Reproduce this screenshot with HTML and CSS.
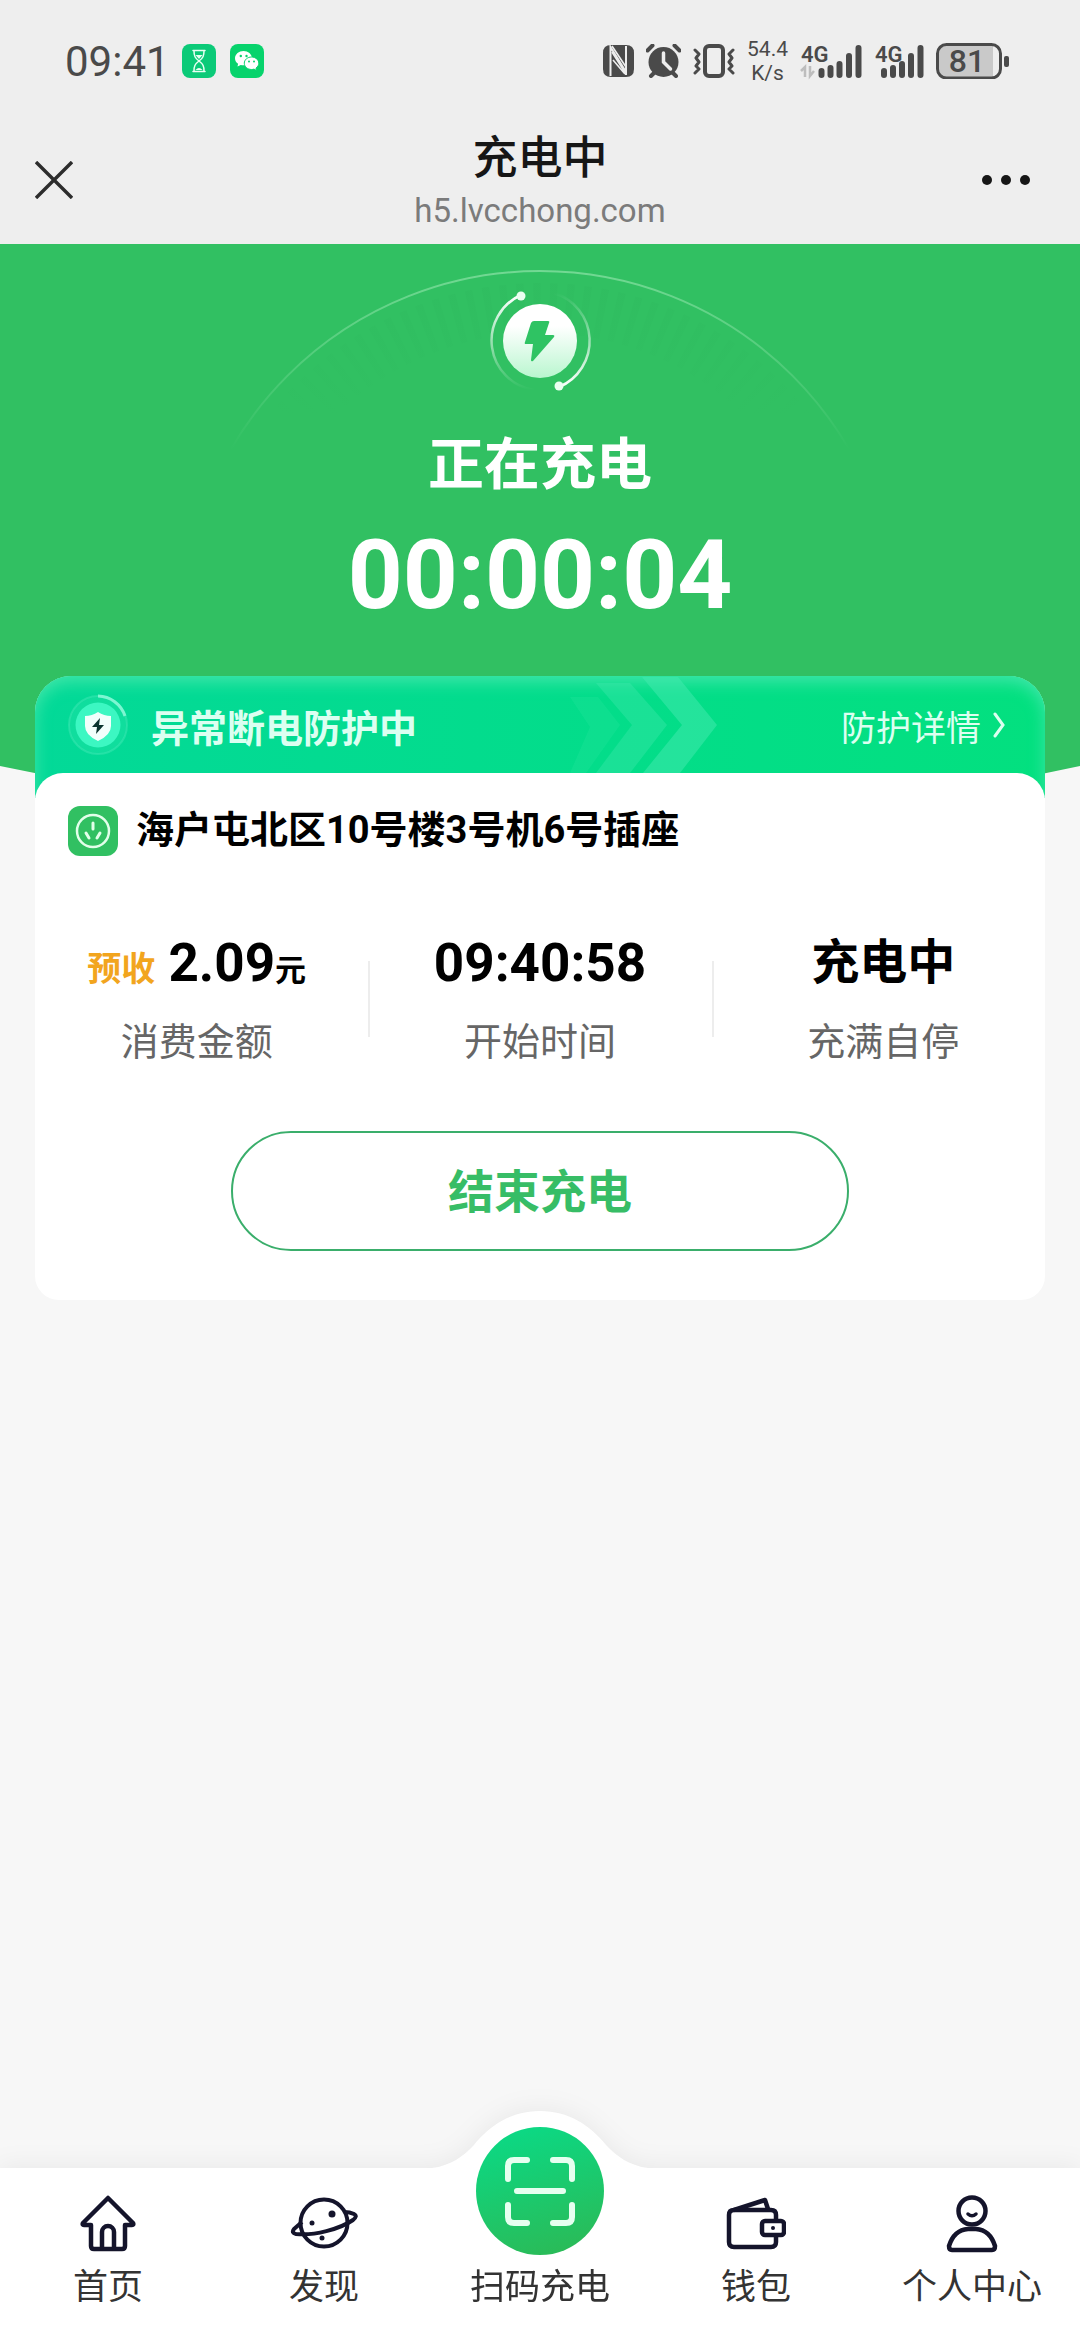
FILE: index.html
```html
<!DOCTYPE html>
<html lang="zh-CN">
<head>
<meta charset="utf-8">
<meta name="viewport" content="width=device-width, initial-scale=1">
<title>充电中</title>
<link rel="stylesheet" href="styles.css">
</head>
<body>
<header class="top">
  <div class="status">
    <div class="status-left">
      <span class="clock">09:41</span>
      <svg class="app" viewBox="0 0 34 34" aria-hidden="true">
        <rect width="34" height="34" rx="8" fill="#0bca78"/>
        <path d="M11 6.500h12M11 27.500h12M12 7c0 5 1 7 5 10c4-3 5-5 5-10M12 27c0-5 1-7 5-10c4 3 5 5 5 10" fill="none" stroke="#e8fff3" stroke-width="1.500" stroke-linecap="round"/>
        <path d="M13.500 11h7l-3.500 4zM13.500 26q3.500-4 7 0z" fill="#e8fff3"/>
      </svg>
      <svg class="app" viewBox="0 0 34 34" aria-hidden="true">
        <rect width="34" height="34" rx="8" fill="#07d36c"/>
        <path d="M13.500 7C9 7 5 10.200 5 14.200c0 2.300 1.200 4.200 3.100 5.500L7.500 22.500l3.200-1.600c1 .3 2 .4 3.200.4C18.500 21.300 22 18.200 22 14.200S18 7 13.500 7z" fill="#fff"/>
        <path d="M21.500 13c-3.900 0-7.200 2.700-7.200 6.200s3.300 6.300 7.200 6.300c.9 0 1.800-.1 2.500-.4l2.600 1.500-.6-2.500c1.700-1.200 2.800-2.900 2.800-4.900 0-3.500-3.400-6.200-7.300-6.200z" fill="#fff" stroke="#07d36c"/>
        <g fill="#07d36c"><circle cx="10.800" cy="12" r="1.200"/><circle cx="16.500" cy="12" r="1.200"/><circle cx="19" cy="17.500" r="1"/><circle cx="24" cy="17.500" r="1"/></g>
      </svg>
    </div>
    <div class="status-right">
      <svg width="31" height="32" viewBox="0 0 31 32" aria-hidden="true">
        <path d="M8 0h15q8 0 8 8v16q0 8-8 8H8q-8 0-8-8V8q0-8 8-8z" fill="#4a4a4a"/>
        <path d="M7.500 31V2L23 27M23 1v29" fill="none" stroke="#eee" stroke-width="2"/>
        <path d="M9 7l14 22M9 1l14 21M10 15l12 14" fill="none" stroke="#eee" stroke-width="1.600"/>
      </svg>
      <svg width="35" height="34" viewBox="0 0 35 34" aria-hidden="true">
        <circle cx="17.500" cy="18" r="15" fill="#4a4a4a"/>
        <path d="M1.500 6.500l5-5M33.500 6.500l-5-5M5 32l4-4M30 32l-4-4" stroke="#4a4a4a" stroke-width="4" stroke-linecap="round"/>
        <path d="M17.500 9v9l7 7" fill="none" stroke="#eee" stroke-width="3.500" stroke-linecap="round"/>
      </svg>
      <svg width="42" height="34" viewBox="0 0 42 34" fill="none" stroke="#4a4a4a" aria-hidden="true">
        <rect x="12" y="2" width="18" height="30" rx="4" stroke-width="4"/>
        <path d="M2 6l4 4-3 4 3 4-3 4 3 3-4 4M40 6l-4 4 3 4-3 4 3 4-3 3 4 4" stroke-width="3" stroke-linejoin="round" stroke-linecap="round"/>
      </svg>
      <div class="speed"><span>54.4</span><span>K/s</span></div>
      <svg width="62" height="44" viewBox="0 -4 62 44" aria-hidden="true">
        <text class="net" x="1" y="19">4G</text>
        <path d="M1 28l4-4v10M10 23v10l4-5" fill="none" stroke="#bdbdbd" stroke-width="2.500"/>
        <path d="M21.500 28v4M30.500 25v7M39.500 21v11M49 13v19M58.500 5v27" stroke="#4a4a4a" stroke-width="6" stroke-linecap="round"/>
      </svg>
      <svg width="50" height="44" viewBox="0 -4 50 44" aria-hidden="true">
        <text class="net" x="1" y="19">4G</text>
        <path d="M10 28v4M19 25v7M28 21v11M37 13v19M46.500 5v27" stroke="#4a4a4a" stroke-width="6" stroke-linecap="round"/>
      </svg>
      <svg width="73" height="36" viewBox="0 0 73 36" aria-hidden="true">
        <path d="M10 3h47v31H10q-7 0-7-8V11q0-8 7-8z" fill="#c9c9c9"/>
        <rect x="1.500" y="1.500" width="63" height="33.500" rx="9" fill="none" stroke="#4a4a4a" stroke-width="3"/>
        <rect x="68" y="13" width="5" height="11" rx="2" fill="#4a4a4a"/>
        <text class="level" x="31" y="29" text-anchor="middle">81</text>
      </svg>
    </div>
  </div>
  <div class="nav">
    <button class="icon-btn" type="button" aria-label="关闭">
      <svg width="38" height="38" viewBox="0 0 38 38"><path d="M1 1l36 36M37 1L1 37" stroke="#2c2c2c" stroke-width="3.400"/></svg>
    </button>
    <div class="nav-title">
      <h1>充电中</h1>
      <p>h5.lvcchong.com</p>
    </div>
    <button class="icon-btn icon-btn-end" type="button" aria-label="更多">
      <svg width="50" height="12" viewBox="0 0 50 12" fill="#161616"><circle cx="6" cy="6" r="5"/><circle cx="25" cy="6" r="5"/><circle cx="44" cy="6" r="5"/></svg>
    </button>
  </div>
</header>

<main>
  <section class="hero">
    <svg class="hero-shape" viewBox="0 0 1080 580" preserveAspectRatio="none" aria-hidden="true">
      <path d="M0 0H1080V522Q540 638 0 522z" fill="#31c062"/>
    </svg>
    <svg class="hero-dial" width="720" height="360" viewBox="0 0 720 360" aria-hidden="true">
      <defs>
        <linearGradient id="fade" x1="0" y1="0" x2="0" y2="1">
          <stop offset="0" stop-color="#8ee3a8" stop-opacity=".7"/>
          <stop offset=".5" stop-color="#8ee3a8" stop-opacity="0"/>
        </linearGradient>
        <linearGradient id="tick" gradientUnits="userSpaceOnUse" x1="0" y1="0" x2="0" y2="150">
          <stop offset="0" stop-color="#219c4c" stop-opacity=".08"/>
          <stop offset="1" stop-color="#219c4c" stop-opacity="0"/>
        </linearGradient>
      </defs>
      <path d="M3 359A357 357 0 0 1 717 359" fill="none" stroke="url(#fade)" stroke-width="2"/>
      <path d="M40 359A320 320 0 0 1 680 359" fill="none" stroke="url(#tick)" stroke-width="50" stroke-dasharray="7 9"/>
    </svg>
    <svg class="bolt" width="104" height="104" viewBox="0 0 104 104" aria-hidden="true">
      <defs>
        <linearGradient id="disc" x1="0" y1="0" x2="0" y2="1"><stop offset=".3" stop-color="#fff"/><stop offset="1" stop-color="#b9f6cf"/></linearGradient>
        <linearGradient id="ringL" x1="0" y1="0" x2="0" y2="1"><stop offset="0" stop-color="#fff"/><stop offset="1" stop-color="#fff" stop-opacity="0"/></linearGradient>
        <linearGradient id="ringR" x1="0" y1="1" x2="0" y2="0"><stop offset="0" stop-color="#fff"/><stop offset="1" stop-color="#fff" stop-opacity="0"/></linearGradient>
      </defs>
      <circle cx="52" cy="52" r="37" fill="url(#disc)"/>
      <path d="M33 6A50 50 0 0 0 46 101" fill="none" stroke="url(#ringL)" stroke-width="2.500"/>
      <path d="M71 98A50 50 0 0 0 66 4" fill="none" stroke="url(#ringR)" stroke-width="2.500"/>
      <circle cx="33" cy="7" r="4.500" fill="#eafff1"/><circle cx="71" cy="97" r="4.500" fill="#eafff1"/>
      <path d="M46 32h14q2 0 1 2l-4 12h8q2 0 1 2L45 72q-2 1-2-1l2-16h-7q-2 0-1-2l6-19q1-2 3-2z" fill="#2fc363"/>
    </svg>
    <h2 class="hero-title">正在充电</h2>
    <p class="timer">00:00:04</p>
  </section>

  <article class="card">
    <div class="guard">
      <svg class="guard-arrows" width="150" height="96" viewBox="0 0 150 96" fill="#45eab0" aria-hidden="true">
        <path d="M72 0h36l39 48-37 48H73l39-48z" opacity=".5"/>
        <path d="M26 6h34l37 42-37 48H26l36-48z" opacity=".36"/>
        <path d="M0 20h28l22 28-34 48H0l20-46z" opacity=".16"/>
      </svg>
      <svg width="62" height="62" viewBox="0 0 62 62" aria-hidden="true">
        <circle cx="31" cy="31" r="29" fill="#2ce6ab" fill-opacity=".35" stroke="#3ee8b4" stroke-opacity=".5" stroke-width="2"/>
        <path d="M31 2A29 29 0 0 1 58 22" fill="none" stroke="#7df6d2" stroke-width="3"/>
        <circle cx="31" cy="31" r="22.500" fill="#3cf7c2"/>
        <path d="M31 18q6 4 13 4v10q0 9-13 15q-13-6-13-15V22q7 0 13-4z" fill="#f2fffc"/>
        <path d="M33 24l-8 9h5l-1 7 8-9h-5z" fill="#0b3530"/>
      </svg>
      <strong class="guard-title">异常断电防护中</strong>
      <a class="guard-link" href="#">防护详情
        <svg width="12" height="26" viewBox="0 0 12 26" fill="none" aria-hidden="true"><path d="M2 2l8 11-8 11" stroke="#dcfff0" stroke-width="3" stroke-linecap="round"/></svg>
      </a>
    </div>
    <div class="panel">
      <div class="place">
        <svg width="50" height="50" viewBox="0 0 50 50" fill="none" stroke="#e2ffea" stroke-linecap="round" aria-hidden="true">
          <rect width="50" height="50" rx="12" fill="#31c062" stroke="none"/>
          <circle cx="25" cy="25" r="16" stroke-width="2.500"/>
          <path d="M25 17v6M18 27l3 5M32 27l-3 5" stroke-width="3"/>
        </svg>
        <h3>海户屯北区10号楼3号机6号插座</h3>
      </div>
      <dl class="stats">
        <div class="stat"><dd><em>预收</em> 2.09<small>元</small></dd><dt>消费金额</dt></div>
        <div class="stat"><dd>09:40:58</dd><dt>开始时间</dt></div>
        <div class="stat"><dd class="state">充电中</dd><dt>充满自停</dt></div>
      </dl>
      <button class="stop" type="button">结束充电</button>
    </div>
  </article>
</main>

<nav class="tabs">
  <svg class="tabs-bump" width="216" height="60" viewBox="0 0 216 60" aria-hidden="true">
    <path d="M0 60V57C18 55 32 45 42 34C58 14 80 0 108 0S158 14 174 34C184 45 198 55 216 57V60z" fill="#fff"/>
  </svg>
  <a class="tab" href="#">
    <svg width="56" height="58" viewBox="0 0 56 58" fill="none" stroke="#14142b" stroke-width="4.500" stroke-linejoin="round" aria-hidden="true">
      <path d="M28 3L3 28q-1 2 1 2h7v21q0 3 3 3h28q3 0 3-3V30h7q2 0 1-2z"/><path d="M22 53V37a6 6 0 0 1 12 0v16"/>
    </svg>
    <span>首页</span>
  </a>
  <a class="tab" href="#">
    <svg width="68" height="58" viewBox="0 0 68 58" fill="none" stroke="#14142b" stroke-width="4" stroke-linejoin="round" aria-hidden="true">
      <circle cx="34" cy="28" r="23.500"/>
      <path d="M12 27L4 34q-3 4 2 5c18 2 44-5 57-14q5-4 1-6-4-2-10-2"/>
      <g fill="#14142b" stroke="none"><circle cx="42" cy="19" r="3.500"/><circle cx="22" cy="28" r="2.500"/><circle cx="32" cy="43" r="2.500"/></g>
    </svg>
    <span>发现</span>
  </a>
  <a class="tab tab-scan" href="#">
    <svg width="130" height="130" viewBox="0 0 130 130" fill="none" aria-hidden="true">
      <defs><linearGradient id="scan" x1=".3" y1="0" x2=".6" y2="1"><stop offset="0" stop-color="#0bd985"/><stop offset="1" stop-color="#2abb58"/></linearGradient></defs>
      <circle cx="65" cy="65" r="64" fill="url(#scan)"/>
      <path d="M52 34H39q-6 0-6 6v13M78 34h13q6 0 6 6v13M33 79v12q0 6 6 6h13M97 79v12q0 6-6 6H78M42 65h46" stroke="#e6fff0" stroke-width="6" stroke-linecap="round"/>
    </svg>
    <span>扫码充电</span>
  </a>
  <a class="tab" href="#">
    <svg width="60" height="58" viewBox="0 0 60 58" fill="none" stroke="#14142b" stroke-width="4.500" stroke-linejoin="round" aria-hidden="true">
      <path d="M50 27v-7q0-5-5-5H8q-5 0-5 5v27q0 5 5 5h37q5 0 5-5v-8"/>
      <path d="M8 15L39 5l3 9"/>
      <rect x="36" y="26" width="22" height="14" rx="3"/><circle cx="47" cy="33" r="2" fill="#14142b" stroke="none"/>
    </svg>
    <span>钱包</span>
  </a>
  <a class="tab" href="#">
    <svg width="52" height="58" viewBox="0 0 52 58" fill="none" stroke="#14142b" stroke-width="4.500" stroke-linejoin="round" aria-hidden="true">
      <circle cx="26" cy="16" r="13.500"/><path d="M22 19q4 3.500 8 0" stroke-linecap="round" stroke-width="3.500"/>
      <path d="M22 34h8q14 1 19 17 0 4-3 4H6q-3 0-3-4Q8 35 22 34z"/>
    </svg>
    <span>个人中心</span>
  </a>
</nav>
</body>
</html>
```
FILE: styles.css
```css
* {
  box-sizing: border-box;
  margin: 0;
  padding: 0;
}

body {
  display: flex;
  flex-direction: column;
  min-height: 100vh;
  background: #f7f7f7;
  color: #000;
  font-family: Roboto, "Noto Sans CJK SC", sans-serif;
}

svg {
  display: block;
  flex: none;
}

button {
  border: 0;
  background: none;
  font: inherit;
}

a {
  color: inherit;
  text-decoration: none;
}

/* Status bar and page title */
.top {
  background: #eee;
}

.status {
  display: flex;
  align-items: center;
  justify-content: space-between;
  height: 122px;
  padding: 0 71px 0 65px;
  color: #4a4a4a;
}

.status-left,
.status-right {
  display: flex;
  align-items: center;
  gap: 12px;
}

.clock {
  font-size: 42px;
}

.app {
  width: 34px;
  height: 34px;
  margin-right: 2px;
}

.speed {
  display: flex;
  flex-direction: column;
  font-size: 21px;
  line-height: 24px;
  text-align: center;
}

.net {
  fill: #4a4a4a;
  font-size: 22px;
  font-weight: 600;
}

.level {
  fill: #4a4a4a;
  font-size: 32px;
  font-weight: 500;
}

.nav {
  display: grid;
  grid-template-columns: 1fr auto 1fr;
  align-items: center;
  height: 122px;
  padding: 0 35px 6px;
}

.icon-btn {
  justify-self: start;
}

.icon-btn-end {
  justify-self: end;
  margin-right: 14px;
}

.nav-title {
  padding-top: 6px;
  text-align: center;
}

.nav-title h1 {
  font-size: 45px;
  font-weight: 500;
  line-height: 56px;
  color: #161616;
}

.nav-title p {
  font-size: 33px;
  line-height: 48px;
  color: #7b7b7b;
}

/* Charging state */
.hero {
  position: relative;
  display: flex;
  flex-direction: column;
  align-items: center;
  height: 432px;
  padding-top: 45px;
  color: #fff;
}

.hero > * {
  position: relative;
}

.hero > .hero-shape {
  position: absolute;
  top: 0;
  left: 0;
  width: 100%;
  height: 580px;
}

.hero > .hero-dial {
  position: absolute;
  top: 25px;
}

.hero-title {
  margin-top: 32px;
  font-size: 56px;
  line-height: 80px;
}

.timer {
  margin-top: 10px;
  font-size: 96px;
  font-weight: 700;
  line-height: 120px;
}

/* Order card */
.card {
  position: relative;
  margin: 0 35px;
  border-radius: 36px 36px 24px 24px;
  background: #fff;
}

.guard {
  position: relative;
  display: flex;
  align-items: center;
  height: 122px;
  padding: 0 40px 24px 32px;
  border-radius: 36px 36px 0 0;
  background: linear-gradient(90deg, #03d998, #03e07f);
  box-shadow: inset 0 6px 16px #3fe6a8;
}

.guard-arrows {
  position: absolute;
  top: 1px;
  left: 53%;
}

.guard-title {
  flex: 1;
  margin-left: 22px;
  font-size: 38px;
  color: #dbfff1;
}

.guard-link {
  position: relative;
  display: flex;
  align-items: center;
  gap: 12px;
  font-size: 35px;
  color: #dcfff0;
}

.panel {
  position: relative;
  margin-top: -25px;
  padding: 30px 33px 49px;
  border-radius: 28px;
  background: #fff;
}

.place {
  display: flex;
  align-items: center;
  gap: 18px;
}

.place h3 {
  padding-bottom: 2px;
  font-size: 38px;
  line-height: 54px;
}

.stats {
  display: grid;
  grid-template-columns: repeat(3, 1fr);
  margin: 68px -43px 0;
}

.stat {
  position: relative;
  text-align: center;
}

.stat + .stat::before {
  content: "";
  position: absolute;
  top: 34px;
  left: 0;
  width: 2px;
  height: 76px;
  background: #ededed;
}

.stat dd {
  font-size: 53px;
  font-weight: 700;
  line-height: 72px;
  white-space: nowrap;
}

.stat .state {
  font-size: 48px;
}

.stat em {
  font-size: 34px;
  font-style: normal;
  line-height: 1;
  color: #f2a51e;
}

.stat small {
  font-size: 31px;
  line-height: 1;
}

.stat dt {
  margin-top: 16px;
  font-size: 38px;
  line-height: 54px;
  color: #666;
}

.stop {
  display: block;
  width: 100%;
  max-width: 618px;
  height: 120px;
  margin: 62px auto 0;
  padding-bottom: 6px;
  border: 2px solid #3aae6b;
  border-radius: 60px;
  font-size: 46px;
  font-weight: 700;
  color: #37bd66;
}

/* Tab bar */
.tabs {
  position: sticky;
  bottom: 0;
  display: grid;
  grid-template-columns: repeat(5, 1fr);
  margin-top: auto;
  padding: 27px 0 26px;
  background: #fff;
  filter: drop-shadow(0 -2px 12px rgba(0, 0, 0, 0.06));
}

.tabs-bump {
  position: absolute;
  top: -57px;
  left: 50%;
  margin-left: -108px;
}

.tab {
  position: relative;
  display: flex;
  flex-direction: column;
  align-items: center;
  justify-content: flex-end;
  gap: 9px;
  font-size: 35px;
  line-height: 52px;
  color: #333;
}

.tab-scan {
  margin-top: -70px;
  gap: 6px;
}
```
